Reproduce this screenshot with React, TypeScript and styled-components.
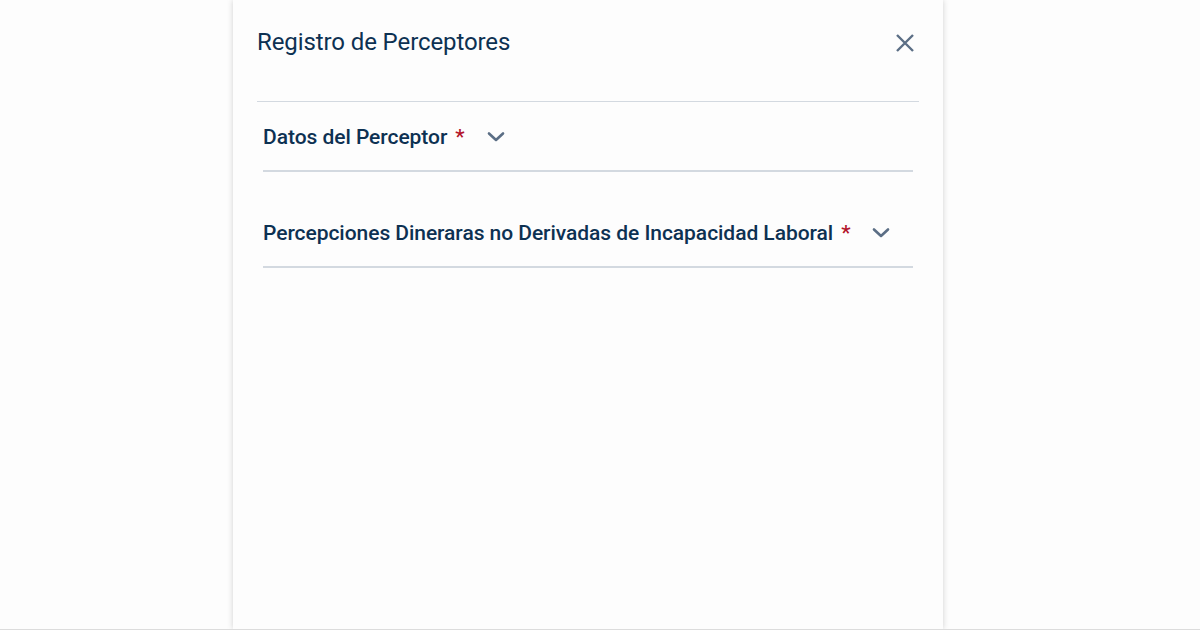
import React from "react";
import styled, { createGlobalStyle } from "styled-components";

const Global = createGlobalStyle`
  html, body { margin: 0; padding: 0; background: #fdfdfd; }
  body { font-family: Roboto, "Noto Sans", Arial, sans-serif; }
`;

const Page = styled.div`
  height: 630px;
  box-sizing: border-box;
  border-bottom: 1px solid #dcdcdc;
  display: flex;
  justify-content: center;
  overflow: hidden;
`;

const Panel = styled.section`
  width: 710px;
  margin-left: -24px;
  background: #fdfdfd;
  box-shadow: 0 0 6px rgba(0, 0, 0, 0.18);
  padding: 0 24px;
  box-sizing: border-box;
  display: flex;
  flex-direction: column;
`;

const Header = styled.header`
  height: 102px;
  box-sizing: border-box;
  display: flex;
  align-items: flex-start;
  justify-content: space-between;
  padding-top: 28px;
  border-bottom: 1px solid #d3d9e0;
`;

const Title = styled.h1`
  margin: 0;
  font-size: 24px;
  font-weight: 400;
  color: #0d3152;
  line-height: 28px;
  letter-spacing: -0.1px;
`;

const CloseButton = styled.button`
  border: 0;
  background: none;
  padding: 0;
  margin: 4px 3px 0 0;
  width: 22px;
  height: 22px;
  display: flex;
  align-items: center;
  justify-content: center;
  color: #5b6e85;
  cursor: pointer;
`;

const Body = styled.div`
  padding: 0 6px;
  display: flex;
  flex-direction: column;
`;

const Item = styled.div<{ $first?: boolean }>`
  margin-top: ${(p) => (p.$first ? "0" : "26px")};
  height: 70px;
  box-sizing: border-box;
  border-bottom: 2px solid #d3d9e0;
  display: flex;
  align-items: center;
  padding-top: 2px;
`;

const ItemTitle = styled.span`
  font-size: 21px;
  font-weight: 500;
  color: #0d3152;
  letter-spacing: -0.05px;
`;

const Required = styled.span`
  color: #b3142b;
  margin-left: 8px;
  font-size: 21px;
  font-weight: 500;
`;

const Chevron = styled.span`
  margin-left: 22px;
  display: flex;
  align-items: center;
  color: #5b6e85;
`;

const ChevronIcon = () => (
  <svg width="18" height="12" viewBox="0 0 18 12" fill="none">
    <path d="M2 2.5 L9 9 L16 2.5" stroke="currentColor" strokeWidth="2.6" strokeLinecap="round" strokeLinejoin="round" />
  </svg>
);

const CloseIcon = () => (
  <svg width="20" height="20" viewBox="0 0 20 20" fill="none">
    <path d="M2 2 L18 18 M18 2 L2 18" stroke="currentColor" strokeWidth="2.4" strokeLinecap="butt" />
  </svg>
);

export default function App() {
  return (
    <>
      <Global />
      <Page>
        <Panel>
          <Header>
            <Title>Registro de Perceptores</Title>
            <CloseButton aria-label="Cerrar">
              <CloseIcon />
            </CloseButton>
          </Header>
          <Body>
            <Item $first>
              <ItemTitle>Datos del Perceptor</ItemTitle>
              <Required>*</Required>
              <Chevron>
                <ChevronIcon />
              </Chevron>
            </Item>
            <Item>
              <ItemTitle>Percepciones Dineraras no Derivadas de Incapacidad Laboral</ItemTitle>
              <Required>*</Required>
              <Chevron>
                <ChevronIcon />
              </Chevron>
            </Item>
          </Body>
        </Panel>
      </Page>
    </>
  );
}
